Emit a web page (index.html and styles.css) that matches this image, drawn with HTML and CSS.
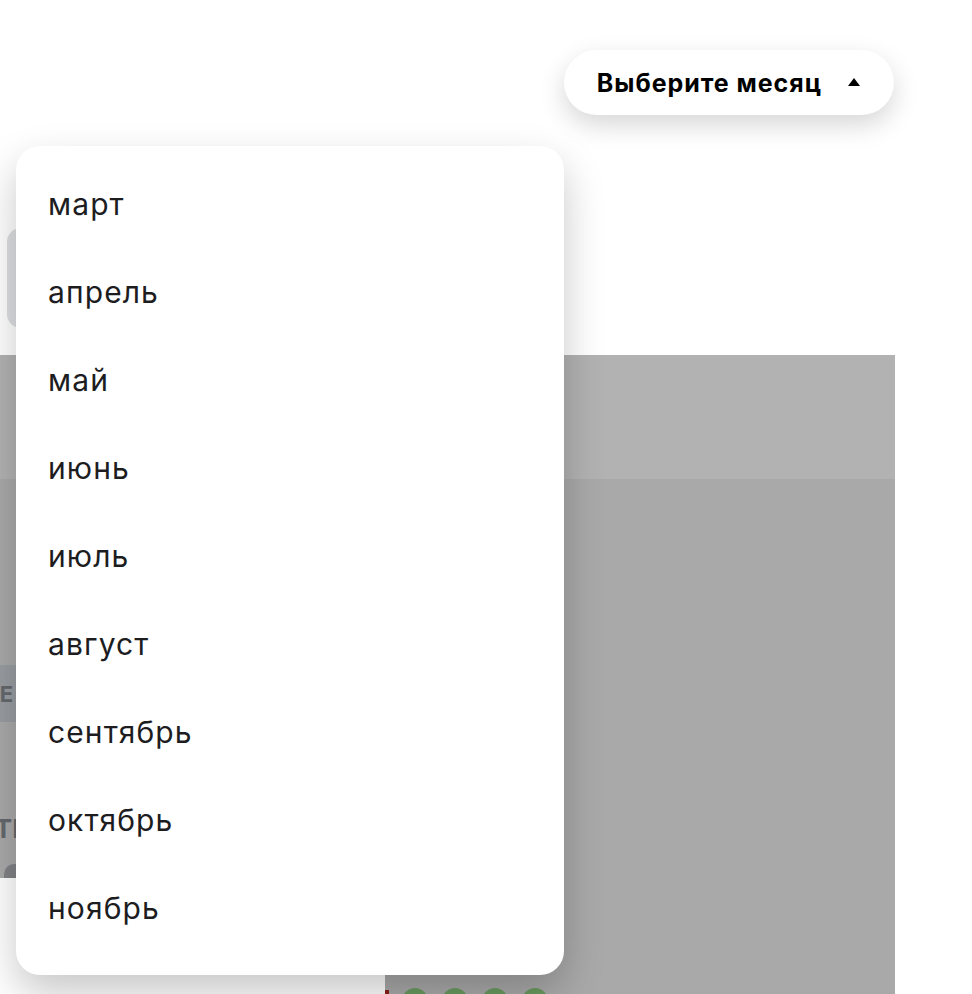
FILE: index.html
```html
<!DOCTYPE html>
<html lang="ru">
<head>
  <meta charset="UTF-8">
  <meta name="viewport" content="width=device-width, initial-scale=1.0">
  <title>Отчёт по месяцам</title>
  <link rel="stylesheet" href="styles.css">
</head>
<body>
  <!-- Month picker -->
  <header class="toolbar">
    <div class="month-picker">
      <button class="month-btn" type="button">
        Выберите месяц
        <span class="caret"></span>
      </button>
    </div>
  </header>

  <!-- Report behind the open menu -->
  <main class="report">
    <div class="summary-card"></div>

    <div class="table">
      <div class="table-head"></div>
      <div class="table-body">
        <div class="col-left">
          <div class="total-row"><span class="clip">ВСЕ</span></div>
          <div class="label-row"><span class="clip wide">ИТОГО ТЕ</span></div>
          <div class="pill"></div>
          <div class="col-left-foot"></div>
        </div>
        <div class="col-right">
          <div class="dots">
            <span class="flag"></span>
            <span class="dot"></span>
            <span class="dot"></span>
            <span class="dot"></span>
            <span class="dot"></span>
          </div>
        </div>
      </div>
    </div>
  </main>

  <!-- Month dropdown -->
  <ul class="month-menu">
    <li>март</li>
    <li>апрель</li>
    <li>май</li>
    <li>июнь</li>
    <li>июль</li>
    <li>август</li>
    <li>сентябрь</li>
    <li>октябрь</li>
    <li>ноябрь</li>
  </ul>
</body>
</html>
```

FILE: styles.css
```css
/* General Styles */
body {
  font-family: 'Inter', 'Roboto', sans-serif;
  margin: 0;
  background-color: #fff;
  color: #1d1d1f;
  overflow: hidden;
  height: 994px;
  position: relative;
}

/* Toolbar with the month button */
.toolbar {
  display: flex;
  justify-content: flex-end;
  padding: 50px 78px 0 0;
  height: 65px;
}

.month-btn {
  display: flex;
  align-items: center;
  gap: 26px;
  height: 65px;
  padding: 0 34px 0 33px;
  border: none;
  border-radius: 33px;
  background-color: #fff;
  box-shadow: 0 10px 26px rgba(0, 0, 0, 0.16);
  font-family: 'Inter', 'Roboto', sans-serif;
  font-size: 25px;
  letter-spacing: 0.95px;
  font-weight: 700;
  color: #000;
  cursor: pointer;
}

.caret {
  width: 0;
  height: 0;
  border-left: 6px solid transparent;
  border-right: 6px solid transparent;
  border-bottom: 8px solid #000;
  margin-top: -2px;
}

/* Report behind the menu */
.report {
  width: 895px;
}

.summary-card {
  margin: 113px 0 0 7px;
  width: 380px;
  height: 100px;
  border-radius: 14px;
  background-color: #dedfe2;
}

.table {
  margin-top: 27px;
}

.table-head {
  height: 124px;
  background-color: #b2b2b2;
}

.table-body {
  display: grid;
  grid-template-columns: 385px 510px;
  height: 515px;
  background-color: #a9a9a9;
}

.col-left {
  display: flex;
  flex-direction: column;
  padding-top: 186px;
}

.total-row {
  height: 57px;
  background-color: #999da1;
  display: flex;
  align-items: center;
}

.label-row {
  margin-top: 86px;
  height: 40px;
  display: flex;
  align-items: center;
}

.clip {
  display: flex;
  justify-content: flex-end;
  width: 13px;
  white-space: nowrap;
  font-size: 22px;
  font-weight: 700;
  color: #64686c;
}

.clip.wide {
  width: 28px;
  font-size: 26px;
}

.pill {
  margin: 16px 0 0 4px;
  width: 60px;
  height: 14px;
  border-radius: 10px 10px 0 0;
  background-color: #818285;
}

.col-left-foot {
  flex: 1;
  background-color: #fff;
}

.col-right {
  display: flex;
  align-items: flex-end;
}

.dots {
  display: flex;
  align-items: flex-start;
  gap: 14px;
  height: 6px;
  padding-left: 17px;
  position: relative;
}

.dot {
  width: 26px;
  height: 26px;
  border-radius: 50%;
  background-color: #6a9a60;
}

.flag {
  position: absolute;
  left: 0;
  top: 2px;
  width: 4px;
  height: 6px;
  background-color: #8a1f1a;
}

/* Month dropdown */
.month-menu {
  position: absolute;
  top: 146px;
  left: 16px;
  width: 548px;
  margin: 0;
  padding: 14px 0 23px;
  list-style: none;
  background-color: #fff;
  border-radius: 24px;
  box-shadow: 0 18px 40px rgba(0, 0, 0, 0.22);
}

.month-menu li {
  height: 88px;
  line-height: 88px;
  padding-left: 32px;
  font-size: 30px;
  letter-spacing: 1.1px;
  color: #1d1d1f;
  cursor: pointer;
}
```
